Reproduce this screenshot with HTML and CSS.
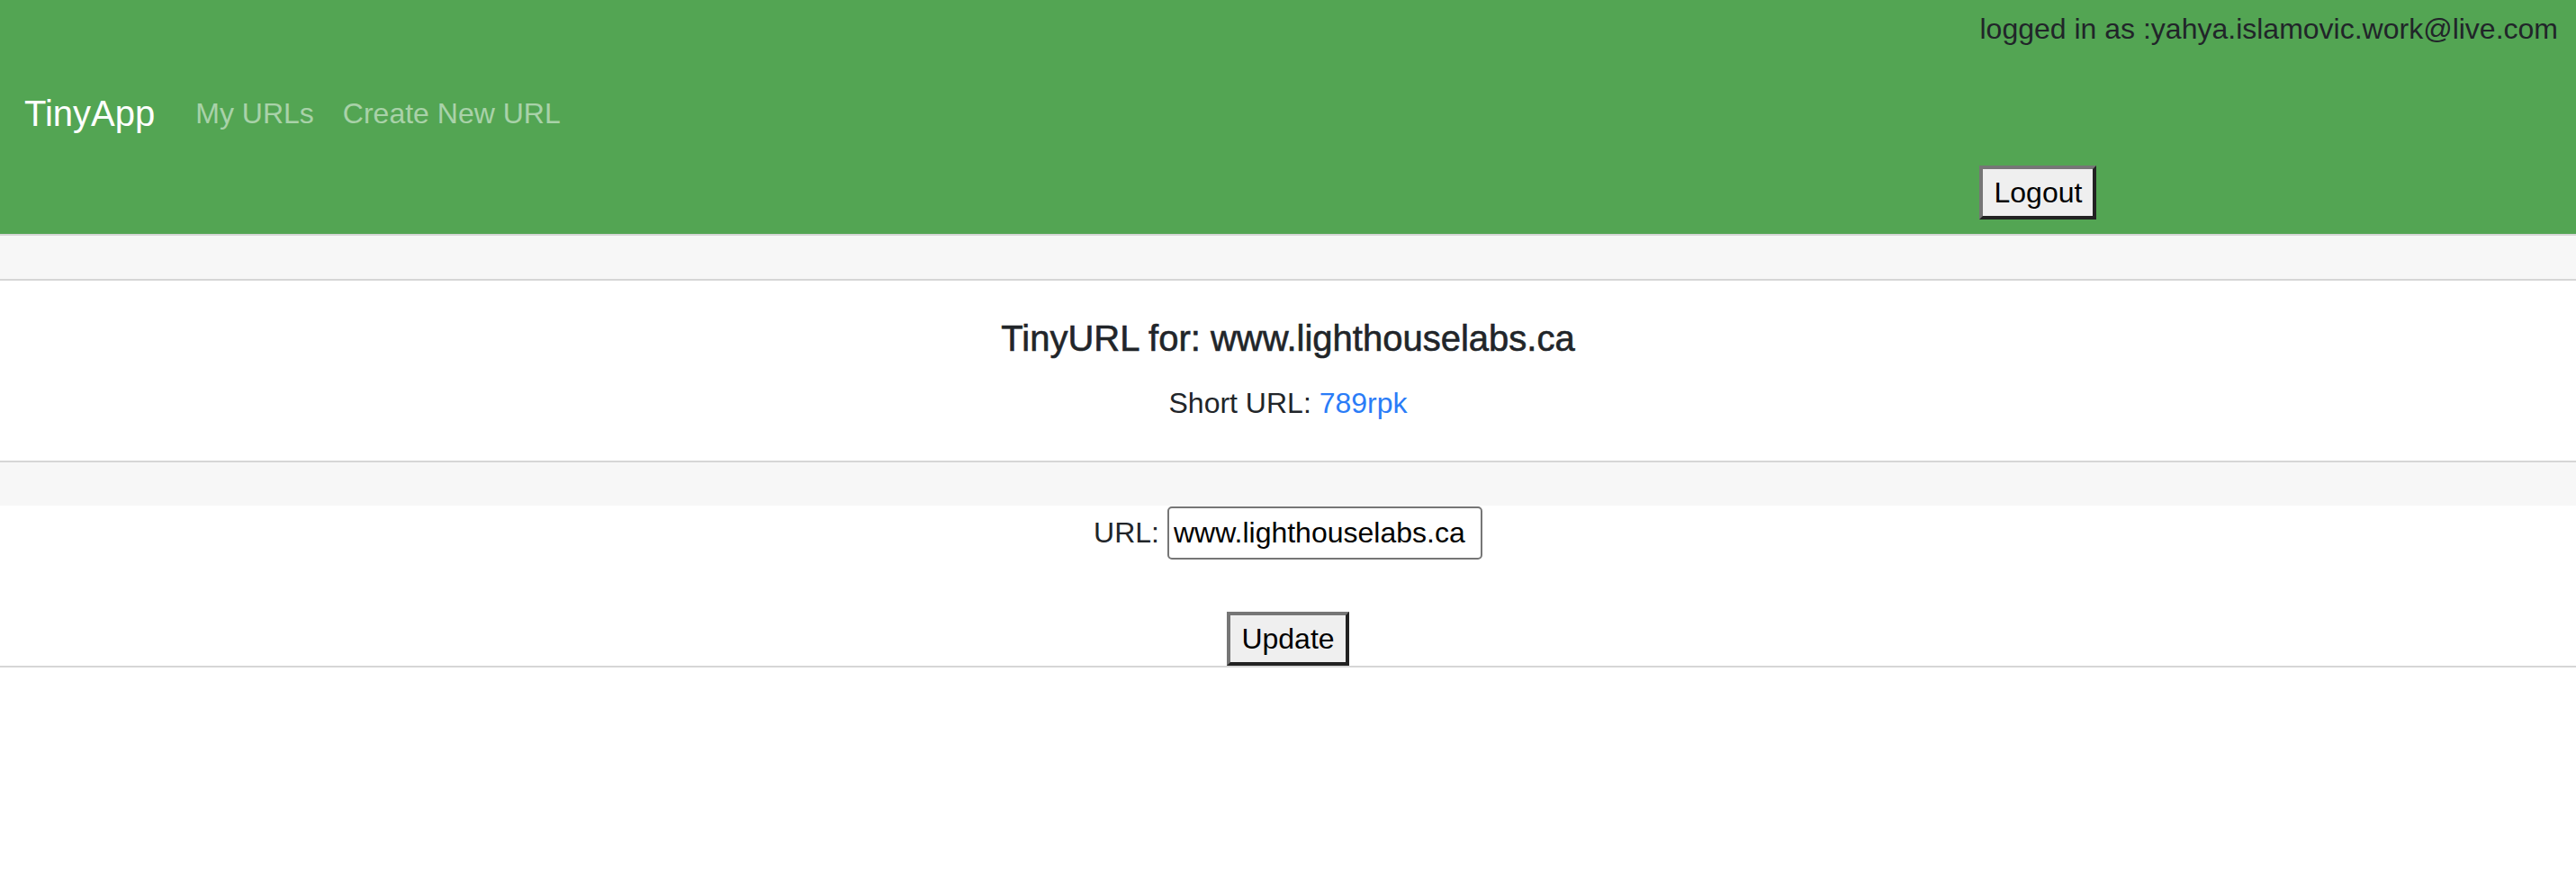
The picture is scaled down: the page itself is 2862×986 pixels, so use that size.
FILE: index.html
```html
<!DOCTYPE html>
<html lang="en">
<head>
<meta charset="utf-8">
<title>TinyApp</title>
<link rel="stylesheet" href="styles.css">
</head>
<body>
<nav class="navbar">
  <div class="nav-left">
    <a class="brand" href="#">TinyApp</a>
    <a class="nav-link" href="#">My URLs</a>
    <a class="nav-link" href="#">Create New URL</a>
  </div>
  <form class="account">
    <span class="who">logged in as :yahya.islamovic.work@live.com</span>
    <button type="button" class="native-btn">Logout</button>
  </form>
</nav>
<main class="card">
  <div class="card-header"></div>
  <div class="card-body">
    <h5 class="card-title">TinyURL for: www.lighthouselabs.ca</h5>
    <p class="card-text">Short URL: <a class="short-link" href="#">789rpk</a></p>
  </div>
  <div class="card-footer"></div>
  <form class="edit-form">
    <div class="field">
      <label class="field-label" for="longURL">URL:</label>
      <input class="field-input" id="longURL" type="text" value="www.lighthouselabs.ca">
    </div>
    <button type="button" class="native-btn">Update</button>
  </form>
</main>
</body>
</html>
```

FILE: styles.css
```css
* {
  box-sizing: border-box;
}

html, body {
  margin: 0;
  padding: 0;
  background: #ffffff;
}

body {
  font-family: "Liberation Sans", Arial, sans-serif;
  font-size: 32px;
  line-height: 48px;
  color: #212529;
}

/* ---------- navbar ---------- */
.navbar {
  display: flex;
  justify-content: space-between;
  align-items: stretch;
  height: 260px;
  padding: 0 20px 0 27px;
  background: #53a553;
}

.nav-left {
  display: flex;
  align-items: center;
  padding-bottom: 8px;
}

.brand {
  font-size: 40px;
  line-height: 60px;
  color: #ffffff;
  text-decoration: none;
  margin-right: 29px;
}

.nav-link {
  padding: 0 16px;
  color: rgba(255, 255, 255, 0.5);
  text-decoration: none;
}

.account {
  display: flex;
  flex-direction: column;
  align-items: flex-start;
  padding: 8px 0 16px 0;
  margin: 0;
}

.who {
  color: #212529;
  white-space: nowrap;
}

.account .native-btn {
  margin-top: auto;
}

/* ---------- native-looking button ---------- */
.native-btn {
  font-family: "Liberation Sans", Arial, sans-serif;
  font-size: 32px;
  line-height: 48px;
  height: 60px;
  padding: 0 12px;
  color: #000000;
  background: #efefef;
  border-width: 4px;
  border-style: solid;
  border-color: #767676 #222222 #222222 #767676;
  border-radius: 0;
}

/* ---------- card ---------- */
.card {
  display: flex;
  flex-direction: column;
  border-top: 2px solid #d6d6d6;
  border-bottom: 2px solid #d6d6d6;
  text-align: center;
}

.card-header {
  height: 50px;
  background: #f7f7f7;
  border-bottom: 2px solid #d6d6d6;
}

.card-body {
  padding: 40px;
}

.card-title {
  margin: 0 0 24px 0;
  font-size: 40px;
  line-height: 48px;
  font-weight: 400;
  -webkit-text-stroke: 0.6px #212529;
  color: #212529;
}

.card-text {
  margin: 0;
}

.short-link {
  color: #2a7cf7;
  text-decoration: none;
}

.card-footer {
  height: 50px;
  background: #f7f7f7;
  border-top: 2px solid #d6d6d6;
}

/* ---------- edit form ---------- */
.edit-form {
  display: flex;
  flex-direction: column;
  align-items: center;
  gap: 58px;
  margin: 0;
}

.field {
  display: flex;
  align-items: center;
  gap: 9px;
  height: 60px;
}

.field-label {
  color: #212529;
}

.field-input {
  width: 350px;
  height: 59px;
  padding: 0 5px;
  font-family: "Liberation Sans", Arial, sans-serif;
  font-size: 32px;
  color: #000000;
  background: #ffffff;
  border: 2px solid #767676;
  border-radius: 5px;
}
```
